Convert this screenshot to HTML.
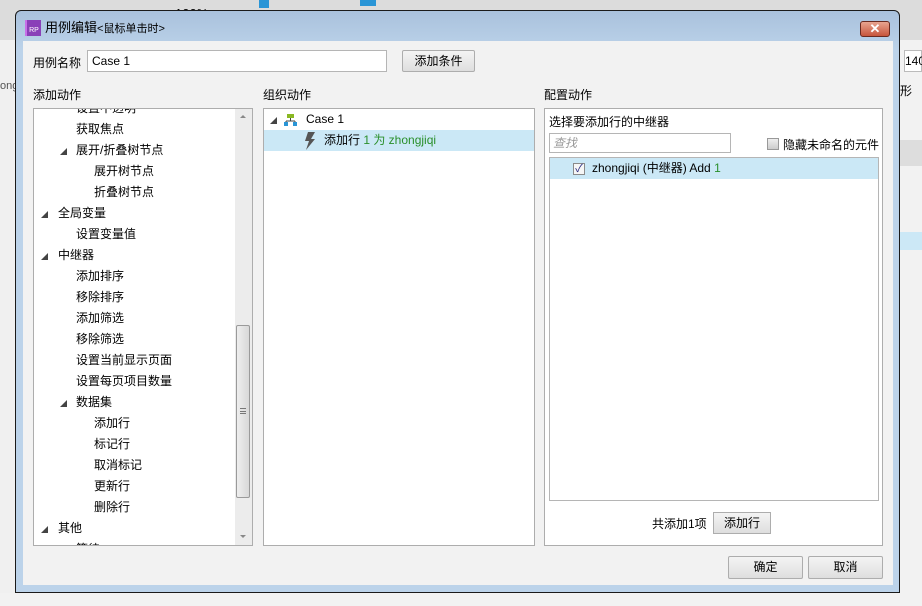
<!DOCTYPE html>
<html><head><meta charset="utf-8"><style>
*{margin:0;padding:0;box-sizing:border-box}
body{width:922px;height:606px;overflow:hidden;background:#e9e9e9;font-family:"Liberation Sans","Noto Sans CJK SC",sans-serif;font-size:12px;color:#000;position:relative}
.a{position:absolute}
.win{left:15px;top:10px;width:885px;height:583px;border:1px solid #1a1a1a;border-radius:6px 6px 0 0;background:linear-gradient(#a9c1dc,#bcd3ea 40px,#bcd3ea);}
.client{left:23px;top:41px;width:870px;height:544px;background:#f2f2f2}
.box{background:#fff;border:1px solid #adadad}
.row{position:absolute;left:0;height:21px;line-height:21px;white-space:nowrap}
.tri{position:absolute;width:0;height:0;border-left:7px solid transparent;border-bottom:7px solid #444;top:8px}
.btn{background:linear-gradient(#f4f4f4,#dedede);border:1px solid #adadad;border-radius:2px;text-align:center}
</style></head><body>
<!-- background app bits -->
<div class="a" style="left:0;top:0;width:922px;height:40px;background:#dcdcdc"></div>
<div class="a" style="left:175px;top:6px;font-size:13px">100%</div>
<div class="a" style="left:259px;top:0;width:10px;height:8px;background:#2a95d6"></div>
<div class="a" style="left:360px;top:0;width:16px;height:6px;background:#2a95d6"></div>
<div class="a" style="left:900px;top:40px;width:22px;height:566px;background:#f2f2f2"></div>
<div class="a" style="left:904px;top:50px;width:18px;height:22px;background:#fff;border:1px solid #bbb;font-size:12px;line-height:20px">140</div>
<div class="a" style="left:900px;top:82px;font-size:12px">形</div>
<div class="a" style="left:900px;top:140px;width:22px;height:26px;background:#ddd"></div>
<div class="a" style="left:900px;top:232px;width:22px;height:18px;background:#cce8f6"></div>
<div class="a" style="left:0;top:40px;width:15px;height:566px;background:#f0f0f0"></div>
<div class="a" style="left:0;top:80px;font-size:11px;color:#555">ong</div>
<div class="a" style="left:0;top:593px;width:922px;height:13px;background:#f2f2f2"></div>

<div class="a win"></div>
<div class="a" style="left:25px;top:20px;width:16px;height:16px;background:#8a3fb8;color:#fff;font-size:7px;line-height:22px;text-align:center;border-left:2px solid #c86fe8">RP</div>
<div class="a" style="left:45px;top:20px;font-size:13px;line-height:16px">用例编辑<span style="font-size:11px">&lt;鼠标单击时&gt;</span></div>
<div class="a" style="left:860px;top:21px;width:30px;height:16px;border:1px solid #6a2a20;border-radius:3px;background:linear-gradient(#e8a590,#c7553c);color:#fff;font-weight:bold;text-align:center;line-height:14px;font-size:13px">✕</div>
<div class="a client"></div>

<div class="a" style="left:33px;top:54px;font-size:12px">用例名称</div>
<div class="a box" style="left:87px;top:50px;width:300px;height:22px;line-height:20px;padding-left:4px;border-color:#b5b5b5">Case 1</div>
<div class="a btn" style="left:402px;top:50px;width:73px;height:22px;line-height:20px">添加条件</div>

<div class="a" style="left:33px;top:86px">添加动作</div>
<div class="a" style="left:263px;top:86px">组织动作</div>
<div class="a" style="left:544px;top:86px">配置动作</div>

<!-- left list -->
<div class="a box" style="left:33px;top:108px;width:220px;height:438px;overflow:hidden">
 <div class="a" style="left:0;top:0;width:201px;height:436px">
  <div class="row" style="top:-11px;left:42px">设置不透明</div>
  <div class="row" style="top:10px;left:42px">获取焦点</div>
  <div class="row" style="top:31px;left:42px">展开/折叠树节点</div><div class="tri" style="left:26px;top:39px"></div>
  <div class="row" style="top:52px;left:60px">展开树节点</div>
  <div class="row" style="top:73px;left:60px">折叠树节点</div>
  <div class="row" style="top:94px;left:24px">全局变量</div><div class="tri" style="left:7px;top:102px"></div>
  <div class="row" style="top:115px;left:42px">设置变量值</div>
  <div class="row" style="top:136px;left:24px">中继器</div><div class="tri" style="left:7px;top:144px"></div>
  <div class="row" style="top:157px;left:42px">添加排序</div>
  <div class="row" style="top:178px;left:42px">移除排序</div>
  <div class="row" style="top:199px;left:42px">添加筛选</div>
  <div class="row" style="top:220px;left:42px">移除筛选</div>
  <div class="row" style="top:241px;left:42px">设置当前显示页面</div>
  <div class="row" style="top:262px;left:42px">设置每页项目数量</div>
  <div class="row" style="top:283px;left:42px">数据集</div><div class="tri" style="left:26px;top:291px"></div>
  <div class="row" style="top:304px;left:60px">添加行</div>
  <div class="row" style="top:325px;left:60px">标记行</div>
  <div class="row" style="top:346px;left:60px">取消标记</div>
  <div class="row" style="top:367px;left:60px">更新行</div>
  <div class="row" style="top:388px;left:60px">删除行</div>
  <div class="row" style="top:409px;left:24px">其他</div><div class="tri" style="left:7px;top:417px"></div>
  <div class="row" style="top:430px;left:42px">等待</div>
 </div>
 <div class="a" style="left:201px;top:0;width:17px;height:436px;background:#ececec"></div>
 <div class="a" style="left:206px;top:6px;border-left:3px solid transparent;border-right:3px solid transparent;border-bottom:3px solid #888"></div>
 <div class="a" style="left:206px;top:426px;border-left:3px solid transparent;border-right:3px solid transparent;border-top:3px solid #888"></div>
 <div class="a" style="left:202px;top:216px;width:14px;height:173px;border:1px solid #9a9a9a;border-radius:2px;background:linear-gradient(90deg,#eee,#d8d8d8)"></div>
 <div class="a" style="left:206px;top:299px;width:6px;height:6px;border-top:1px solid #777;border-bottom:1px solid #777"><div style="border-top:1px solid #777;margin-top:2px"></div></div>
</div>

<!-- middle -->
<div class="a box" style="left:263px;top:108px;width:272px;height:438px">
 <div class="tri" style="left:6px;top:8px"></div>
 <svg class="a" style="left:20px;top:5px" width="13" height="12"><rect x="3" y="0" width="7" height="4" fill="#8ab822"/><path d="M6.5 4v3M2 7h9M2 7v2M11 7v2" stroke="#444" fill="none"/><rect x="0" y="8" width="4" height="4" fill="#2a95d6"/><rect x="9" y="8" width="4" height="4" fill="#2a95d6"/></svg>
 <div class="row" style="top:0;left:42px">Case 1</div>
 <div class="a" style="left:0;top:21px;width:270px;height:21px;background:#cbe8f6"></div>
 <svg class="a" style="left:40px;top:23px" width="12" height="18"><path d="M4 0h7L7 7h4L2 18l3-9H1z" fill="#555"/></svg>
 <div class="row" style="top:21px;left:60px">添加行 <span style="color:#2a8f2a">1 为 zhongjiqi</span></div>
</div>

<!-- right -->
<div class="a box" style="left:544px;top:108px;width:339px;height:438px">
 <div class="a" style="left:4px;top:4px">选择要添加行的中继器</div>
 <div class="a box" style="left:4px;top:24px;width:182px;height:20px;border-color:#b5b5b5;color:#999;font-style:italic;padding-left:3px;line-height:18px">查找</div>
 <div class="a" style="left:222px;top:29px;width:12px;height:12px;border:1px solid #999;background:linear-gradient(#eee,#ccc)"></div>
 <div class="a" style="left:238px;top:27px">隐藏未命名的元件</div>
 <div class="a box" style="left:4px;top:48px;width:330px;height:344px;border-color:#b5b5b5">
  <div class="a" style="left:0;top:0;width:328px;height:21px;background:#cbe8f6"></div>
  <div class="a" style="left:23px;top:5px;width:12px;height:12px;border:1px solid #8a8a8a;background:#f6f6f6;color:#2a2a80;font-size:11px;line-height:10px;text-align:center">✓</div>
  <div class="row" style="left:42px;top:0">zhongjiqi (中继器) Add <span style="color:#2a8f2a">1</span></div>
 </div>
 <div class="a" style="left:107px;top:406px">共添加1项</div>
 <div class="a btn" style="left:168px;top:403px;width:58px;height:22px;line-height:20px;border-radius:0">添加行</div>
</div>

<div class="a btn" style="left:728px;top:556px;width:75px;height:23px;line-height:21px">确定</div>
<div class="a btn" style="left:808px;top:556px;width:75px;height:23px;line-height:21px">取消</div>
</body></html>
